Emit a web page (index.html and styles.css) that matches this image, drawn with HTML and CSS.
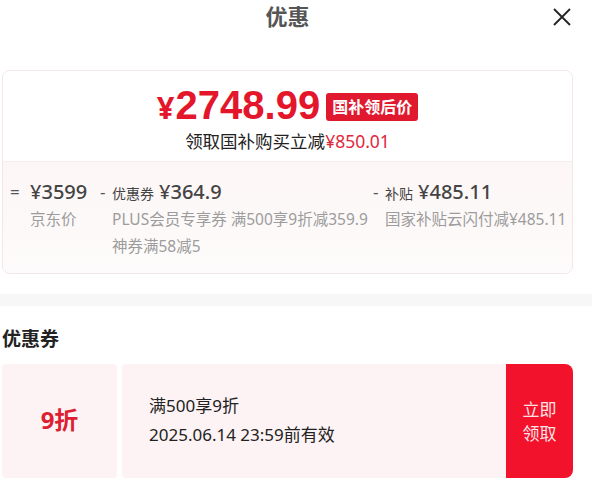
FILE: index.html
```html
<!DOCTYPE html>
<html lang="zh-CN">
<head>
    <meta charset="UTF-8">
    <meta name="viewport" content="width=device-width, initial-scale=1.0">
    <title>优惠</title>
    <link rel="stylesheet" href="styles.css">
</head>
<body>

<div class="container">
    <div class="header">
        <h1>优惠</h1>
        <span class="close">
            <svg width="20" height="20" viewBox="0 0 20 20">
                <path d="M2 2 L18 18 M18 2 L2 18" stroke="#222" stroke-width="1.8" fill="none"/>
            </svg>
        </span>
    </div>

    <div class="price-card">
        <div class="price-top">
            <div class="final-price">
                <span class="yen">¥</span><span class="amount">2748.99</span>
                <span class="badge">国补领后价</span>
            </div>
            <div class="save-line">领取国补购买立减<span class="red">¥850.01</span></div>
        </div>
        <div class="price-detail">
            <div class="item item-jd">
                <span class="sign">=</span>
                <div class="item-body">
                    <div class="item-main"><span class="num">¥3599</span></div>
                    <div class="item-desc">京东价</div>
                </div>
            </div>
            <div class="item item-coupon">
                <span class="sign">-</span>
                <div class="item-body">
                    <div class="item-main"><span class="label">优惠券</span><span class="num">¥364.9</span></div>
                    <div class="item-desc">PLUS会员专享券 满500享9折减359.9</div>
                    <div class="item-desc">神券满58减5</div>
                </div>
            </div>
            <div class="item item-sub">
                <span class="sign">-</span>
                <div class="item-body">
                    <div class="item-main"><span class="label">补贴</span><span class="num">¥485.11</span></div>
                    <div class="item-desc">国家补贴云闪付减¥485.11</div>
                </div>
            </div>
        </div>
    </div>
</div>

<div class="band"></div>

<div class="container">
    <h2>优惠券</h2>
    <div class="coupon">
        <div class="coupon-value">9折</div>
        <div class="coupon-info">
            <div class="coupon-title">满500享9折</div>
            <div class="coupon-date">2025.06.14 23:59前有效</div>
        </div>
        <button class="coupon-btn">立即<br>领取</button>
    </div>
</div>

</body>
</html>
```

FILE: styles.css
```css
body {
    font-family: "Noto Sans", "Noto Sans CJK SC", sans-serif;
    background-color: #fff;
    margin: 0;
    padding: 0;
    color: #333;
}
.container {
    width: 571px;
    padding-left: 2px;
}
.header {
    position: relative;
    height: 70px;
}
.header h1 {
    margin: 0;
    padding-top: 1px;
    text-align: center;
    font-size: 22px;
    line-height: 30px;
    color: #555;
    font-weight: bold;
}
.close {
    position: absolute;
    right: 1px;
    top: 7px;
    width: 20px;
    height: 20px;
}
.price-card {
    border: 1px solid #f3e6e7;
    border-radius: 8px;
    overflow: hidden;
}
.price-top {
    height: 90px;
    border-bottom: 1px solid #f6eeee;
    text-align: center;
    background-color: #fff;
}
.final-price {
    display: flex;
    justify-content: center;
    align-items: baseline;
    padding-top: 13px;
    height: 42px;
    color: #e3162b;
    font-weight: bold;
}
.yen {
    font-size: 31px;
    line-height: 40px;
    margin-right: 1px;
}
.amount {
    font-family: "Liberation Sans", Arial, sans-serif;
    font-size: 40px;
    line-height: 42px;
}
.badge {
    align-self: center;
    margin-left: 6px;
    padding: 0 6px;
    height: 28px;
    line-height: 28px;
    font-size: 16px;
    color: #fff;
    background-color: #e1192e;
    border-radius: 3px;
    position: relative;
    top: 2px;
}
.save-line {
    font-size: 17.5px;
    line-height: 24px;
    margin-top: 3px;
    color: #222;
}
.red {
    color: #e0283c;
}
.price-detail {
    display: grid;
    grid-template-columns: 95px 275px 1fr;
    height: 111px;
    background: linear-gradient(180deg, #fdf6f6 0%, #fdfbfb 100%);
}
.item {
    display: flex;
    padding-top: 16px;
}
.item-jd {
    padding-left: 7px;
}
.item .sign {
    font-size: 17px;
    line-height: 28px;
    color: #555;
    width: 20px;
}
.item-coupon .sign {
    width: 12px;
    padding-left: 2px;
}
.item-sub .sign {
    width: 12px;
}
.item-main {
    height: 28px;
    line-height: 28px;
    color: #444;
}
.label {
    font-size: 14px;
    margin-right: 5px;
}
.num {
    font-size: 20px;
    font-weight: 500;
}
.item-desc {
    font-size: 15.5px;
    line-height: 27px;
    color: #9c9c9c;
    white-space: nowrap;
}
.band {
    height: 12px;
    margin-top: 20px;
    background-color: #f7f7f8;
}
h2 {
    margin: 0;
    padding-top: 20px;
    height: 38px;
    font-size: 19px;
    line-height: 26px;
    color: #222;
}
.coupon {
    display: flex;
    height: 114px;
}
.coupon-value {
    width: 115px;
    padding-bottom: 6px;
    background-color: #fdf3f4;
    border-radius: 4px;
    color: #dc1f33;
    font-size: 24px;
    font-weight: bold;
    display: flex;
    align-items: center;
    justify-content: center;
}
.coupon-info {
    flex: 1;
    margin-left: 5px;
    background-color: #fdf3f4;
    border-radius: 4px 0 0 4px;
    padding-left: 27px;
    padding-top: 28px;
    color: #222;
}
.coupon-title {
    font-size: 17px;
    line-height: 28px;
}
.coupon-date {
    font-size: 17px;
    line-height: 30px;
}
.coupon-btn {
    width: 67px;
    border: none;
    background-color: #f2122b;
    color: #fde2e5;
    font-family: "Noto Sans CJK SC", sans-serif;
    font-size: 17px;
    line-height: 24px;
    border-radius: 0 8px 8px 0;
    padding: 0;
    cursor: pointer;
}
```
